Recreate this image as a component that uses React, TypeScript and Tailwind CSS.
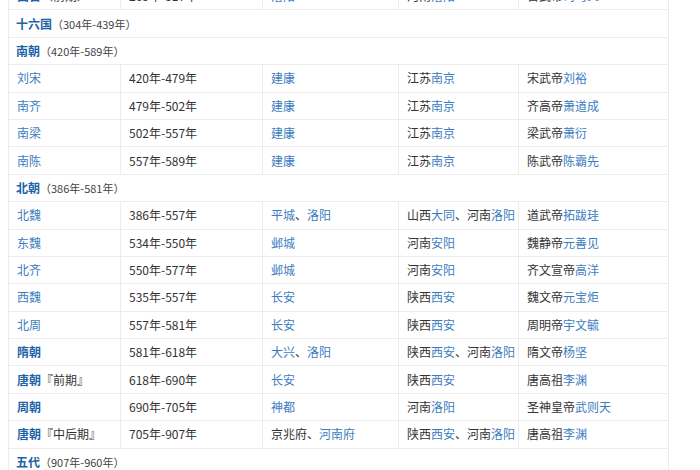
type Cell = string | { t: string; link?: boolean }[];

type Row =
  | { kind: "group"; name: string; span: string }
  | { kind: "data"; cells: Cell[]; bold?: string; suffix?: string };

const L = (t: string) => ({ t, link: true });
const P = (t: string) => ({ t });

const rows: Row[] = [
  { kind: "data", bold: "西晋", suffix: "（前期）", cells: ["", "265年-317年", [L("洛阳")], [P("河南"), L("洛阳")], [P("晋武帝"), L("司马炎")]] },
  { kind: "group", name: "十六国", span: "（304年-439年）" },
  { kind: "group", name: "南朝", span: "（420年-589年）" },
  { kind: "data", cells: [[L("刘宋")], "420年-479年", [L("建康")], [P("江苏"), L("南京")], [P("宋武帝"), L("刘裕")]] },
  { kind: "data", cells: [[L("南齐")], "479年-502年", [L("建康")], [P("江苏"), L("南京")], [P("齐高帝"), L("萧道成")]] },
  { kind: "data", cells: [[L("南梁")], "502年-557年", [L("建康")], [P("江苏"), L("南京")], [P("梁武帝"), L("萧衍")]] },
  { kind: "data", cells: [[L("南陈")], "557年-589年", [L("建康")], [P("江苏"), L("南京")], [P("陈武帝"), L("陈霸先")]] },
  { kind: "group", name: "北朝", span: "（386年-581年）" },
  { kind: "data", cells: [[L("北魏")], "386年-557年", [L("平城"), P("、"), L("洛阳")], [P("山西"), L("大同"), P("、河南"), L("洛阳")], [P("道武帝"), L("拓跋珪")]] },
  { kind: "data", cells: [[L("东魏")], "534年-550年", [L("邺城")], [P("河南"), L("安阳")], [P("魏静帝"), L("元善见")]] },
  { kind: "data", cells: [[L("北齐")], "550年-577年", [L("邺城")], [P("河南"), L("安阳")], [P("齐文宣帝"), L("高洋")]] },
  { kind: "data", cells: [[L("西魏")], "535年-557年", [L("长安")], [P("陕西"), L("西安")], [P("魏文帝"), L("元宝炬")]] },
  { kind: "data", cells: [[L("北周")], "557年-581年", [L("长安")], [P("陕西"), L("西安")], [P("周明帝"), L("宇文毓")]] },
  { kind: "data", bold: "隋朝", cells: ["", "581年-618年", [L("大兴"), P("、"), L("洛阳")], [P("陕西"), L("西安"), P("、河南"), L("洛阳")], [P("隋文帝"), L("杨坚")]] },
  { kind: "data", bold: "唐朝", suffix: "『前期』", cells: ["", "618年-690年", [L("长安")], [P("陕西"), L("西安")], [P("唐高祖"), L("李渊")]] },
  { kind: "data", bold: "周朝", cells: ["", "690年-705年", [L("神都")], [P("河南"), L("洛阳")], [P("圣神皇帝"), L("武则天")]] },
  { kind: "data", bold: "唐朝", suffix: "『中后期』", cells: ["", "705年-907年", [P("京兆府、"), L("河南府")], [P("陕西"), L("西安"), P("、河南"), L("洛阳")], [P("唐高祖"), L("李渊")]] },
  { kind: "group", name: "五代", span: "（907年-960年）" },
];

const widths = ["w-[112px]", "w-[142px]", "w-[136px]", "w-[120px]", "w-[150px]"];

const renderCell = (c: Cell) =>
  typeof c === "string"
    ? c
    : c.map((p, i) => (
        <span key={i} className={p.link ? "text-[#3b7cc0]" : ""}>
          {p.t}
        </span>
      ));

export default function App() {
  return (
    <div
      className="w-[700px] h-[470px] overflow-hidden bg-white text-[12px] text-[#333]"
      style={{ fontFamily: '"Noto Sans CJK SC", "Liberation Sans", sans-serif' }}
    >
      <table className="ml-[8px] -mt-[18px] w-[660px] border-collapse table-fixed">
        <colgroup>
          {widths.map((w) => (
            <col key={w} className={w} />
          ))}
        </colgroup>
        <tbody>
          {rows.map((r, i) =>
            r.kind === "group" ? (
              <tr key={i} className="h-[27.4px]">
                <td colSpan={5} className="border border-[#ececec] pl-[7px] leading-none">
                  <span className="font-bold text-[#1d63a8] text-[12px]">{r.name}</span>
                  <span className="text-[11px] text-[#444]">{r.span}</span>
                </td>
              </tr>
            ) : (
              <tr key={i} className="h-[27.4px]">
                {r.cells.map((c, j) => (
                  <td
                    key={j}
                    className="border border-[#ececec] pl-[8px] leading-none whitespace-nowrap overflow-hidden"
                  >
                    {j === 0 && r.bold ? (
                      <>
                        <span className="font-bold text-[#1d63a8]">{r.bold}</span>
                        {r.suffix && <span className="text-[#333]">{r.suffix}</span>}
                      </>
                    ) : (
                      renderCell(c)
                    )}
                  </td>
                ))}
              </tr>
            )
          )}
        </tbody>
      </table>
    </div>
  );
}
